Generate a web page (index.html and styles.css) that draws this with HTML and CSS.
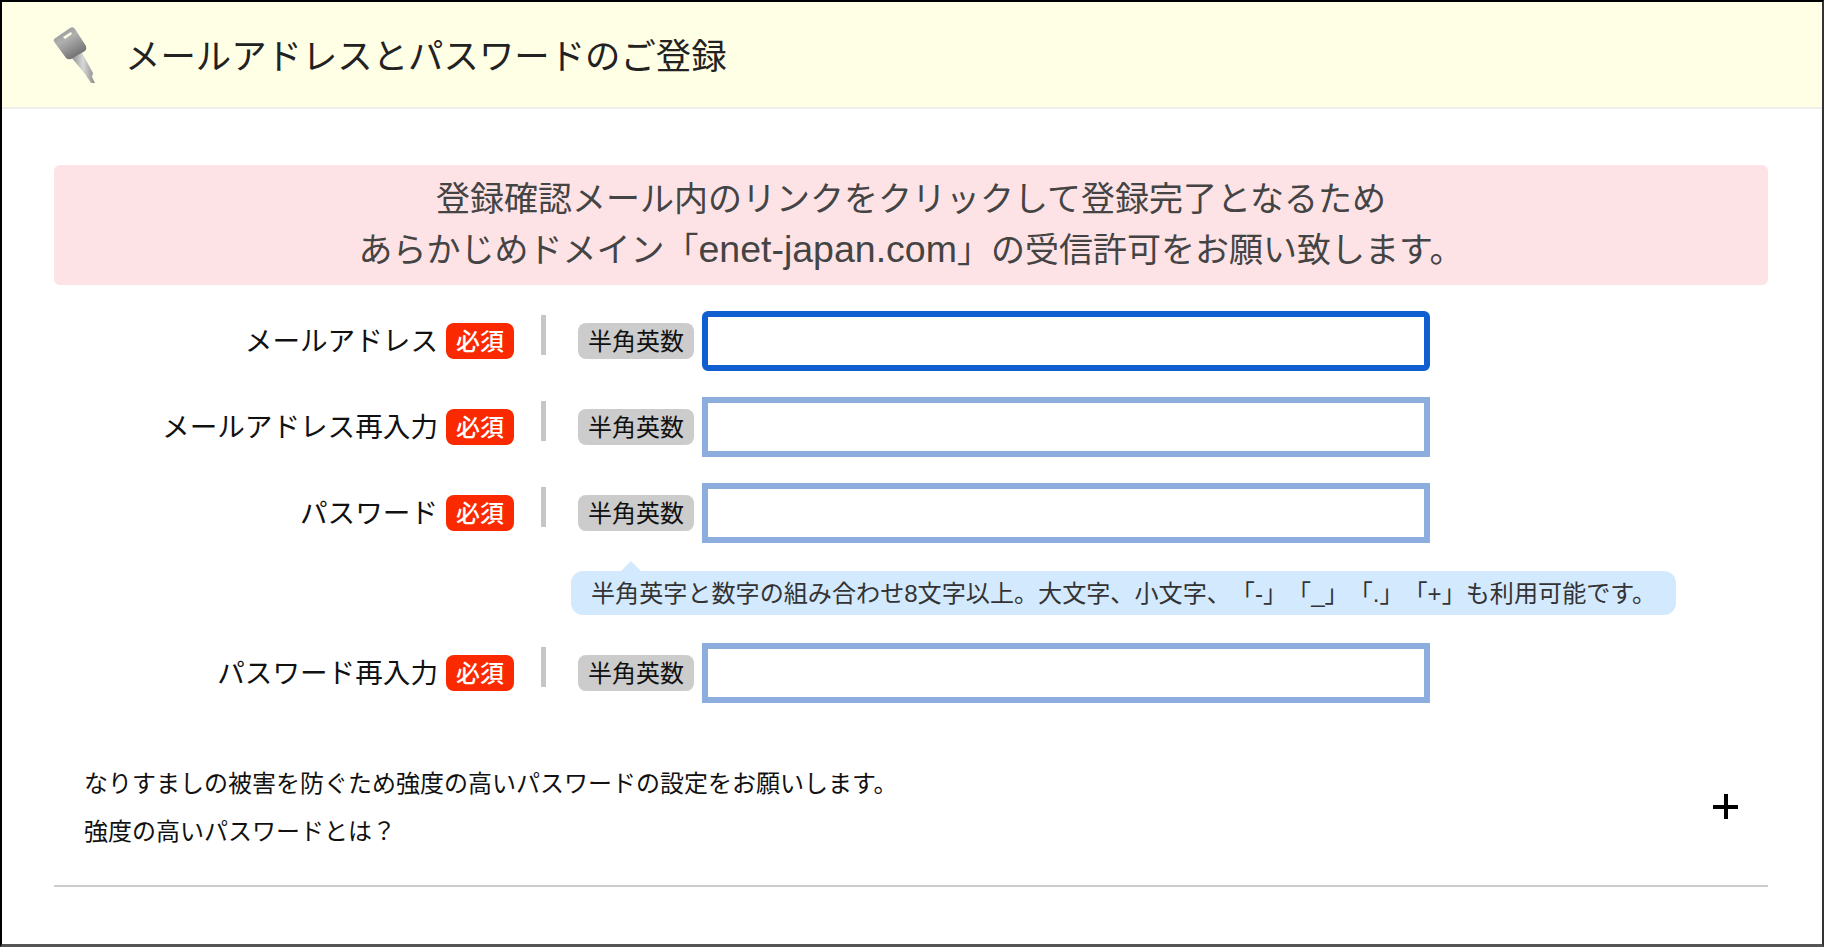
FILE: index.html
```html
<!DOCTYPE html>
<html lang="ja">
  <head>
    <meta charset="UTF-8" />
    <meta name="viewport" content="width=device-width, initial-scale=1.0" />
    <title>メールアドレスとパスワードのご登録</title>
    <link rel="stylesheet" href="styles.css">
  </head>
  <body>
    <div class="con">
      <div class="head">
        <svg class="key" width="50" height="70" viewBox="0 0 50 70">
          <defs>
            <linearGradient id="metal" x1="0" y1="0" x2="0.6" y2="1">
              <stop offset="0" stop-color="#8d8d8d" />
              <stop offset="0.45" stop-color="#b0b0b0" />
              <stop offset="1" stop-color="#6f6f6f" />
            </linearGradient>
            <linearGradient id="shaft" x1="0" y1="0" x2="1" y2="0">
              <stop offset="0" stop-color="#8a8a8a" />
              <stop offset="0.5" stop-color="#d8d8d8" />
              <stop offset="1" stop-color="#8a8a8a" />
            </linearGradient>
          </defs>
          <path d="M23 34 L33 28 L45 50 L44 54 L47 60 L43 60 L39 54 L37 51 Z" fill="url(#shaft)" />
          <path d="M6 16 L22 5 Q25 3 27 6 L38 23 Q39 26 37 28 L23 36 Q20 37 18 35 L7 20 Q5 18 6 16 Z" fill="url(#metal)" />
          <path d="M15 14 L23 9 L24 11 L17 16 Z" fill="#fffee6" />
        </svg>
        <h1>メールアドレスとパスワードのご登録</h1>
      </div>

      <div class="main">
        <div class="notice">
          <p>登録確認メール内のリンクをクリックして登録完了となるため</p>
          <p>あらかじめドメイン「<span class="domain">enet-japan.com</span>」の受信許可をお願い致します。</p>
        </div>

        <div class="row">
          <div class="label"><span class="name">メールアドレス</span><span class="req">必須</span></div>
          <span class="bar"></span>
          <span class="type">半角英数</span>
          <input class="field focus" type="text" />
        </div>
        <div class="row">
          <div class="label"><span class="name">メールアドレス再入力</span><span class="req">必須</span></div>
          <span class="bar"></span>
          <span class="type">半角英数</span>
          <input class="field" type="text" />
        </div>
        <div class="row">
          <div class="label"><span class="name">パスワード</span><span class="req">必須</span></div>
          <span class="bar"></span>
          <span class="type">半角英数</span>
          <input class="field" type="text" />
        </div>
        <div class="hint">半角英字と数字の組み合わせ8文字以上。大文字、小文字、「-」「_」「.」「+」も利用可能です。</div>
        <div class="row">
          <div class="label"><span class="name">パスワード再入力</span><span class="req">必須</span></div>
          <span class="bar"></span>
          <span class="type">半角英数</span>
          <input class="field" type="text" />
        </div>

        <div class="more">
          <div>
            <p>なりすましの被害を防ぐため強度の高いパスワードの設定をお願いします。</p>
            <p>強度の高いパスワードとは？</p>
          </div>
          <span class="plus"></span>
        </div>
      </div>
    </div>
  </body>
</html>
```

FILE: styles.css
```css
* {
  box-sizing: border-box;
}

html,
body {
  margin: 0;
  height: 100%;
}

body {
  font-family: "Liberation Sans", "Noto Sans CJK JP", sans-serif;
  background-color: #fff;
  color: #111;
  text-spacing-trim: space-all;
}

p {
  margin: 0;
}

.con {
  height: 947px;
  border-top: 2px solid #000;
  border-left: 2px solid #000;
  border-right: 2px solid #333;
  border-bottom: 3px solid #555;
}

.head {
  display: flex;
  align-items: center;
  height: 107px;
  padding-left: 46px;
  background-color: #ffffe5;
  border-bottom: 2px solid #eeeeea;
}

.key {
  margin: 6px 27px 0 0;
}

h1 {
  margin: 0 0 2px;
  font-size: 35.4px;
  font-weight: normal;
  color: #222;
}

.main {
  padding: 56px 54px 0 52px;
}

.notice {
  height: 120px;
  padding-top: 9px;
  margin-bottom: 26px;
  text-align: center;
  font-size: 34px;
  line-height: 50px;
  color: #444;
  background-color: #fde3e5;
  border-radius: 6px;
}

.domain {
  font-size: 37.5px;
}

.row {
  display: flex;
  align-items: center;
  height: 60px;
  margin-bottom: 26px;
}

.label {
  display: flex;
  align-items: center;
  justify-content: flex-end;
  width: 460px;
  font-size: 27.6px;
  color: #111;
}

.name {
  margin-bottom: 5px;
}

.req {
  width: 68px;
  height: 36px;
  margin-left: 8px;
  text-align: center;
  font-size: 24px;
  font-weight: 500;
  line-height: 38px;
  color: #fff;
  background-color: #fb2900;
  border-radius: 8px;
}

.bar {
  width: 5px;
  height: 40px;
  margin: 0 32px 12px 27px;
  background-color: #c9c5c2;
}

.type {
  width: 116px;
  height: 36px;
  margin-right: 8px;
  text-align: center;
  font-size: 24px;
  line-height: 38px;
  color: #111;
  background-color: #ccc;
  border-radius: 8px;
}

.field {
  width: 728px;
  height: 60px;
  padding: 0 10px;
  background-color: #fff;
  border: 6px solid #8eaddf;
  outline: none;
}

.focus {
  border-color: #0f5fd0;
  border-radius: 6px;
}

.hint {
  position: relative;
  width: 1105px;
  height: 44px;
  margin: 28px 0 28px 517px;
  padding-left: 20px;
  font-size: 24.1px;
  line-height: 45px;
  color: #333;
  background-color: #d3e9fe;
  border-radius: 12px;
}

.hint::before {
  content: "";
  position: absolute;
  top: -10px;
  left: 50px;
  border-left: 10px solid transparent;
  border-right: 10px solid transparent;
  border-bottom: 10px solid #d3e9fe;
}

.more {
  display: flex;
  align-items: center;
  justify-content: space-between;
  margin-top: 57px;
  padding: 0 30px 29px;
  font-size: 24px;
  line-height: 48px;
  color: #111;
  border-bottom: 2px solid #ccc;
}

.plus {
  width: 25px;
  height: 25px;
  margin-bottom: 3px;
  background:
    linear-gradient(#000, #000) center / 25px 4px no-repeat,
    linear-gradient(#000, #000) center / 4px 25px no-repeat;
}
```
